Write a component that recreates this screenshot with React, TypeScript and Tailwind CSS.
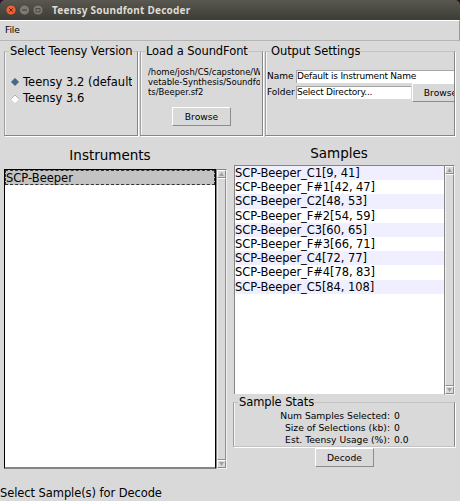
import type { ReactNode } from 'react';

const samples = [
  'SCP-Beeper_C1[9, 41]',
  'SCP-Beeper_F#1[42, 47]',
  'SCP-Beeper_C2[48, 53]',
  'SCP-Beeper_F#2[54, 59]',
  'SCP-Beeper_C3[60, 65]',
  'SCP-Beeper_F#3[66, 71]',
  'SCP-Beeper_C4[72, 77]',
  'SCP-Beeper_F#4[78, 83]',
  'SCP-Beeper_C5[84, 108]',
];

const stats = [
  ['Num Samples Selected:', '0'],
  ['Size of Selections (kb):', '0'],
  ['Est. Teensy Usage (%):', '0.0'],
];

/* Grooved frame whose caption interrupts the top edge. */
function Group({ title, className, children }: { title: string; className: string; children: ReactNode }) {
  return (
    <section className={`relative shrink-0 border border-t-[#c3c3c3] border-l-[#a0a0a0] border-r-[#858585] border-b-[#858585] shadow-[1px_1px_0_#fff,inset_1px_0_0_#f4f4f4] ${className}`}>
      <h2 className="absolute -top-[8px] left-[4px] max-w-[125px] overflow-hidden whitespace-nowrap bg-[#d9d9d9] pl-px text-[11.5px] leading-[15px] tracking-[-0.09px]">{title}</h2>
      {children}
    </section>
  );
}

function Button({ children, className }: { children: ReactNode; className: string }) {
  return (
    <button className={`shrink-0 border border-t-white border-l-white border-r-[#8c8c8c] border-b-[#8c8c8c] bg-[#d9d9d9] text-[9.2px] leading-[15px] ${className}`}>
      {children}
    </button>
  );
}

function Arrow({ down }: { down?: boolean }) {
  return (
    <div className="flex h-[8px] shrink-0 items-center justify-center border border-t-white border-l-white border-r-[#8c8c8c] border-b-[#8c8c8c] bg-[#d9d9d9]">
      <svg width="5" height="4" viewBox="0 0 5 4" className={down ? 'rotate-180' : ''}>
        <path d="M2.5 0 5 4H0Z" fill="#a0a0a0" />
      </svg>
    </div>
  );
}

function Scrollbar({ className }: { className: string }) {
  return (
    <div className={`flex shrink-0 flex-col border border-t-[#858585] border-l-[#858585] border-r-[#f0f0f0] border-b-[#f0f0f0] bg-[#d9d9d9] ${className}`}>
      <Arrow />
      <div className="grow border border-t-white border-l-[#f0f0f0] border-r-[#909090] border-b-[#909090]" />
      <Arrow down />
    </div>
  );
}

function Radio({ on, children }: { on?: boolean; children: ReactNode }) {
  return (
    <label className="flex h-[16.5px] items-center overflow-hidden whitespace-nowrap text-[11.5px]">
      <svg width="8" height="8" viewBox="0 0 8 8" className="mr-[4px] shrink-0">
        <path d="M4 0 8 4 4 8 0 4Z" fill={on ? '#4a6984' : '#fff'} />
        <path d="M0 4 4 0 8 4" fill="none" stroke={on ? '#8295a6' : '#a5a5a5'} strokeWidth=".8" />
      </svg>
      {children}
    </label>
  );
}

export default function App() {
  return (
    <main className="flex h-[501px] w-[460px] flex-col overflow-hidden bg-[#d9d9d9] font-['DejaVu_Sans',sans-serif] text-black">
      <div className="h-[20px] shrink-0 bg-[#2b0b24]">
        <header className="flex h-[20px] items-center rounded-t-[5px] bg-linear-to-b from-[#59574f] to-[#3d3c37] pl-[6px]">
          <svg width="38" height="12" viewBox="0 0 38 12" fill="none">
            <circle cx="5" cy="6" r="5" fill="#ef6135" stroke="#38332e" strokeWidth=".6" />
            <path d="m3.2 4.2 3.6 3.6m0-3.6L3.2 7.8" stroke="#602313" strokeWidth="1" />
            <circle cx="18.5" cy="6" r="5" fill="#7d7b73" stroke="#3c3b37" strokeWidth=".6" />
            <path d="M16 6h5" stroke="#3c3b37" />
            <circle cx="32" cy="6" r="5" fill="#7d7b73" stroke="#3c3b37" strokeWidth=".6" />
            <path d="M30 4.5h4v3.5h-4z" stroke="#3c3b37" strokeWidth=".8" />
          </svg>
          <h1 className="ml-[8px] whitespace-nowrap font-['Noto_Sans',sans-serif] text-[10px] leading-[20px] font-bold tracking-[0.23px] text-[#dfdbd2]">Teensy Soundfont Decoder</h1>
        </header>
      </div>
      <nav className="h-[21px] shrink-0 border-t border-r border-b border-t-white border-r-[#999] border-b-[#b5b5b5] pl-[5px] text-[9px] leading-[18px] tracking-[-0.1px]">File</nav>

      <div className="mt-[10px] flex h-[85px] shrink-0 pl-[4px]">
        <Group title="Select Teensy Version" className="w-[134px] pt-[22px] pl-[6px]">
          <div className="w-[121px] overflow-hidden">
            <Radio on>Teensy 3.2 (default</Radio>
            <Radio>Teensy 3.6</Radio>
          </div>
        </Group>
        <Group title="Load a SoundFont" className="ml-[2px] w-[123px] pt-[15px] pl-[7px]">
          <div className="w-[112px] overflow-hidden text-[8.45px] leading-[10px] whitespace-nowrap">
            /home/josh/CS/capstone/W<br />vetable-Synthesis/Soundfo<br />ts/Beeper.sf2
          </div>
          <Button className="mt-[10px] ml-[24px] h-[19px] w-[59px]">Browse</Button>
        </Group>
        <Group title="Output Settings" className="ml-[2px] w-[190px] pt-[18px]">
          <div className="w-[188px] overflow-hidden text-[9px] tracking-[-0.22px]">
            <div className="flex h-[13px]">
              <label className="w-[30px] shrink-0 pl-[1px] leading-[13px] tracking-normal">Name</label>
              <div className="h-[13px] w-[158px] border-t border-l border-[#a5a5a5] bg-white leading-[11px] whitespace-nowrap">Default is Instrument Name</div>
            </div>
            <div className="flex h-[19px] items-start">
              <label className="mt-[3px] w-[30px] shrink-0 pl-[1px] leading-[13px] tracking-normal">Folder</label>
              <div className="mt-[3px] h-[13px] w-[115px] shrink-0 border-t border-l border-[#a5a5a5] bg-white leading-[11px]">Select Directory...</div>
              <Button className="ml-px h-[19px] w-[57px] tracking-normal">Browse</Button>
            </div>
          </div>
        </Group>
      </div>

      <div className="flex h-[338px] shrink-0">
        <section className="ml-[4px] w-[223px] shrink-0">
          <h2 className="h-[33px] pt-[10px] pr-[11px] text-center text-[13.5px] leading-[18px]">Instruments</h2>
          <div className="flex">
            <div className="h-[300px] w-[212px] shrink-0 border border-b-2 border-black border-b-[#858585] bg-white">
              <div className="h-[15px] border border-dashed border-[#333] bg-[#c3c3c3] text-[11.5px] leading-[14px]">SCP-Beeper</div>
            </div>
            <Scrollbar className="h-[300px] w-[11px]" />
          </div>
        </section>
        <section className="ml-[6px] w-[223px] shrink-0">
          <h2 className="h-[29px] pt-[8px] pr-[11px] text-center text-[13.5px] leading-[18px]">Samples</h2>
          <div className="flex pl-px">
            <div className="h-[229px] w-[210px] shrink-0 border-t border-l border-[#858585] bg-white">
              {samples.map((name) => (
                <div key={name} className="h-[14.2px] whitespace-nowrap text-[11.5px] leading-[14.2px] tracking-[-0.08px] odd:bg-[#efefff]">{name}</div>
              ))}
            </div>
            <Scrollbar className="h-[230px] w-[11px]" />
          </div>
          <Group title="Sample Stats" className="mt-[7px] h-[45px] w-[222px] border-b-[#c3c3c3] pt-[7px]">
            {stats.map(([label, value]) => (
              <div key={label} className="flex h-[12px] text-[9.2px] leading-[12px]">
                <span className="w-[156px] text-right whitespace-nowrap">{label}</span>
                <span className="ml-[4px]">{value}</span>
              </div>
            ))}
          </Group>
          <Button className="mt-[1px] ml-[82px] block h-[19px] w-[59px]">Decode</Button>
        </section>
      </div>
      <footer className="mt-[12px] text-[11.5px] leading-[15px] tracking-[-0.08px]">Select Sample(s) for Decode</footer>
    </main>
  );
}
